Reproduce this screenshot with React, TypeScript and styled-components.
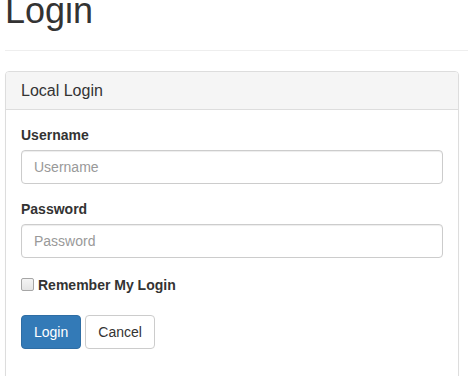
import React, { useState } from 'react'
import styled, { createGlobalStyle } from 'styled-components'

const GlobalStyle = createGlobalStyle`
  html, body {
    margin: 0;
    padding: 0;
    background: #fff;
    overflow: hidden;
  }
  body {
    font-family: "Liberation Sans", Arial, Helvetica, sans-serif;
    font-size: 14px;
    line-height: 20px;
    color: #333;
  }
  * { box-sizing: border-box; }
`

const App: React.FC = () => {
  const [username, setUsername] = useState('')
  const [password, setPassword] = useState('')
  const [remember, setRemember] = useState(false)

  return (
    <>
      <GlobalStyle />
      <Page>
        <PageHeader>
          <Heading>Login</Heading>
        </PageHeader>

        <Panel>
          <PanelHeading>
            <PanelTitle>Local Login</PanelTitle>
          </PanelHeading>
          <PanelBody>
            <form onSubmit={e => e.preventDefault()}>
              <FormGroup>
                <Label htmlFor="username">Username</Label>
                <Input
                  id="username"
                  placeholder="Username"
                  value={username}
                  onChange={e => setUsername(e.target.value)}
                />
              </FormGroup>
              <FormGroup>
                <Label htmlFor="password">Password</Label>
                <Input
                  id="password"
                  type="password"
                  placeholder="Password"
                  value={password}
                  onChange={e => setPassword(e.target.value)}
                />
              </FormGroup>
              <RememberRow>
                <Checkbox
                  type="checkbox"
                  checked={remember}
                  onChange={e => setRemember(e.target.checked)}
                />
                <strong>Remember My Login</strong>
              </RememberRow>
              <Actions>
                <Button variant="primary" type="submit">Login</Button>
                <Button variant="default" type="button">Cancel</Button>
              </Actions>
            </form>
          </PanelBody>
        </Panel>
      </Page>
    </>
  )
}

const Page = styled.div`
  padding-left: 5px;
`

const PageHeader = styled.div`
  padding-bottom: 9px;
  margin-bottom: 20px;
  border-bottom: 1px solid #eee;
`

const Heading = styled.h1`
  margin: -9px 0 10px;
  font-size: 36px;
  font-weight: 500;
  line-height: 1.1;
  color: #333;
`

const Panel = styled.div`
  width: 454px;
  border: 1px solid #ddd;
  border-radius: 4px;
  background: #fff;
  box-shadow: 0 1px 1px rgba(0, 0, 0, 0.05);
`

const PanelHeading = styled.div`
  padding: 10px 15px;
  background: #f5f5f5;
  border-bottom: 1px solid #ddd;
  border-radius: 3px 3px 0 0;
`

const PanelTitle = styled.h3`
  margin: 0;
  font-size: 16px;
  font-weight: 400;
  line-height: 17px;
  color: #333;
`

const PanelBody = styled.div`
  padding: 15px 15px 40px;
`

const FormGroup = styled.div`
  margin-bottom: 15px;
`

const Label = styled.label`
  display: inline-block;
  margin-bottom: 5px;
  font-weight: 700;
`

const Input = styled.input`
  display: block;
  width: 100%;
  height: 34px;
  padding: 6px 12px;
  font-family: inherit;
  font-size: 14px;
  line-height: 20px;
  color: #555;
  background: #fff;
  border: 1px solid #ccc;
  border-radius: 4px;
  box-shadow: inset 0 1px 1px rgba(0, 0, 0, 0.075);
  outline: none;

  &::placeholder {
    color: #999;
  }
`

const RememberRow = styled.label`
  display: flex;
  align-items: center;
  min-height: 22px;
  padding-top: 2px;
  margin-bottom: 20px;
  cursor: pointer;
`

const Checkbox = styled.input`
  appearance: none;
  width: 13px;
  height: 13px;
  margin: 0 4px 0 0;
  border: 1px solid #a6a6a6;
  border-radius: 2px;
  background: linear-gradient(#f4f4f4, #e4e4e4);

  &:checked {
    background: #fff;
    border-color: #333;
  }
`

const Actions = styled.div`
  display: flex;
  gap: 4px;
`

const Button = styled.button<{ variant: 'primary' | 'default' }>`
  padding: 6px 12px;
  font-family: inherit;
  font-size: 14px;
  line-height: 20px;
  border-radius: 4px;
  border: 1px solid ${({ variant }) => (variant === 'primary' ? '#2e6da4' : '#ccc')};
  background: ${({ variant }) => (variant === 'primary' ? '#337ab7' : '#fff')};
  color: ${({ variant }) => (variant === 'primary' ? '#fff' : '#333')};
  cursor: pointer;
`

export default App
